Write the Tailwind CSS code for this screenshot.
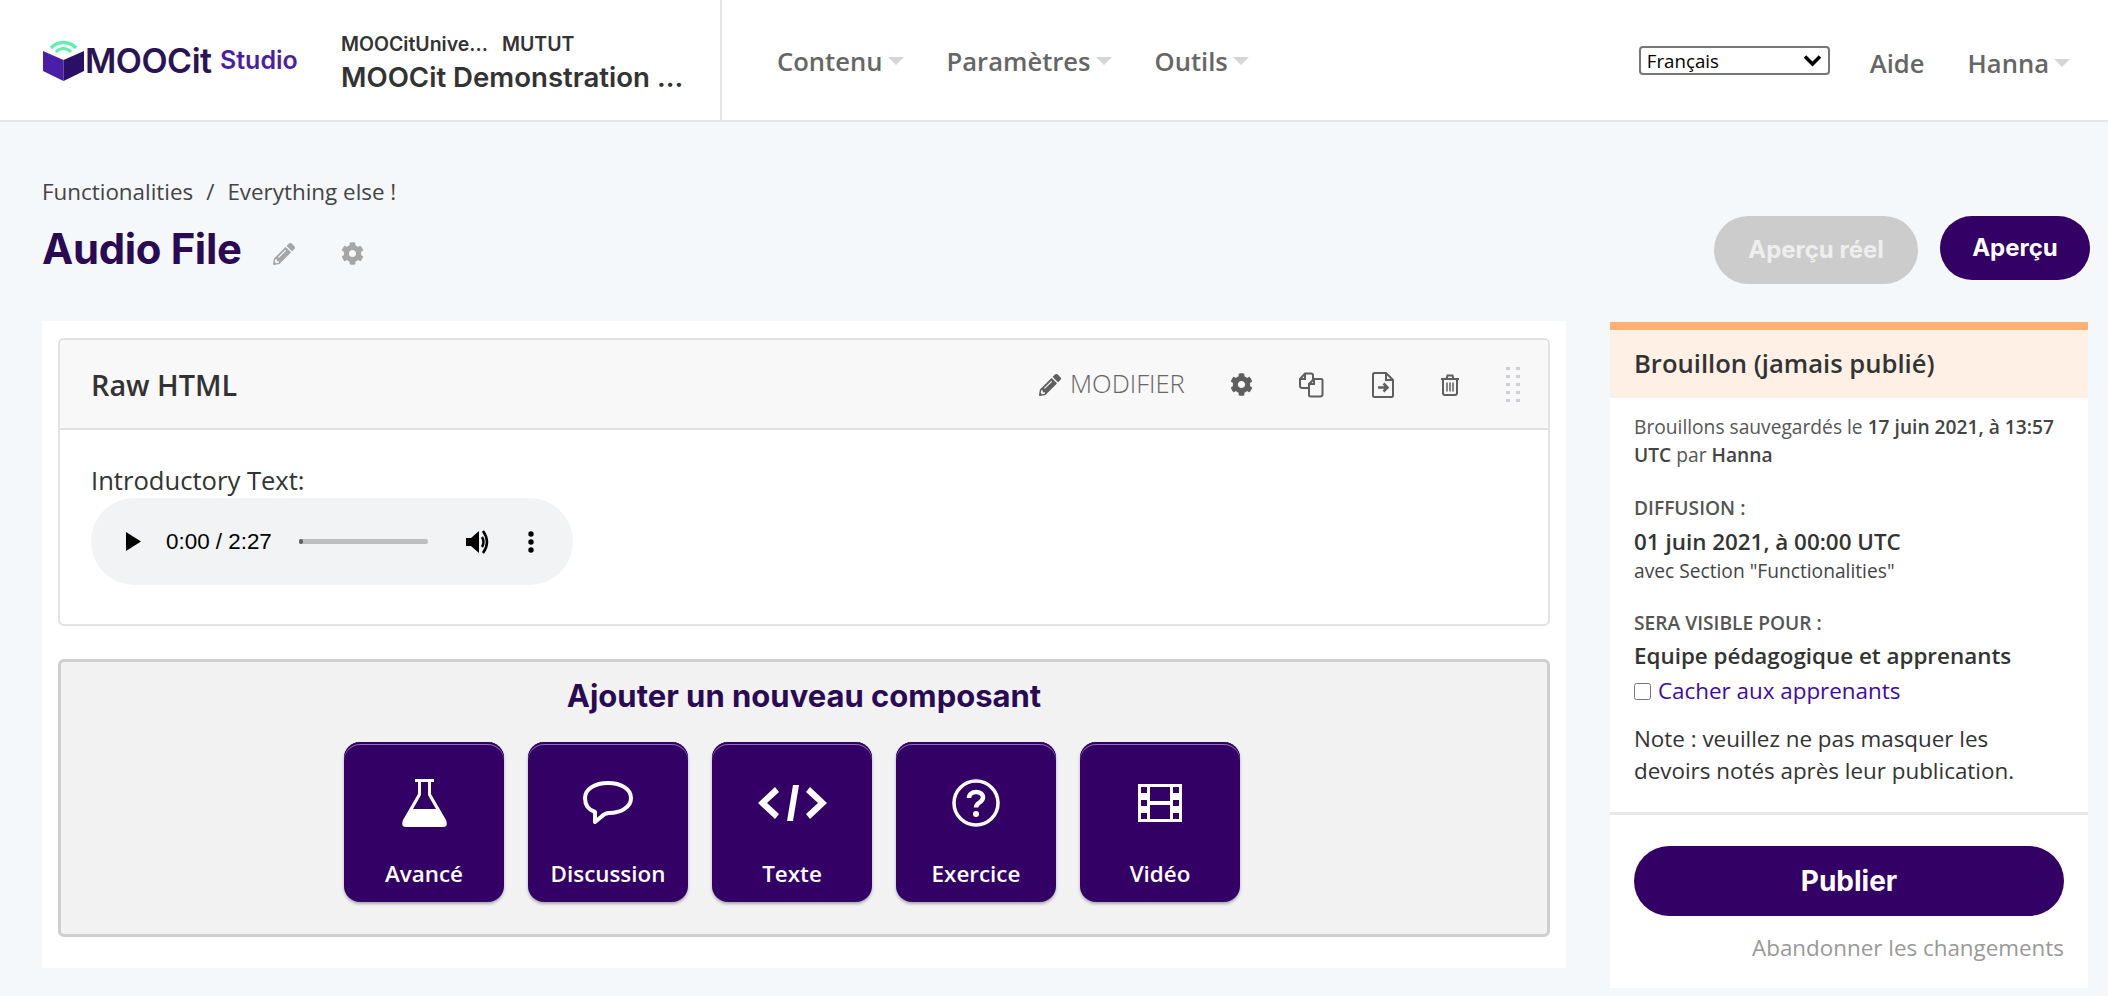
<!DOCTYPE html>
<html lang="fr">
<head>
    <meta charset="UTF-8">
    <title>Audio File</title>
    <script src="https://cdn.jsdelivr.net/npm/@tailwindcss/browser@4"></script>
</head>
<body class="bg-[#f5f8fb] font-['Open_Sans',sans-serif] text-[#333] w-[2108px] h-[996px] overflow-hidden">

    <!-- Header -->
    <header class="h-[122px] bg-white border-b-2 border-[#e4e6ea] flex items-stretch">
        <div class="w-[722px] shrink-0 border-r-2 border-[#e4e6ea] flex items-center pl-[43px]">
            <svg class="w-[41px] h-[42px] shrink-0 -mt-[1px]" viewBox="0 0 41 42">
                <path d="M0 12 L20.500 21 L20.500 42 L0 32 Z" fill="#4a1fa8"/>
                <path d="M41 12 L20.500 21 L20.500 42 L41 32 Z" fill="#2a0f66"/>
                <path d="M8 9 A17 17 0 0 1 33 9" fill="none" stroke="#5ff0b0" stroke-width="3.500"/>
                <path d="M13 13 A10 10 0 0 1 28 13" fill="none" stroke="#5ff0b0" stroke-width="3"/>
            </svg>
            <span class="ml-[1px] w-[135px] font-['Inter',sans-serif] font-semibold text-[34px] tracking-[-0.5px] text-[#2a1454]">MOOCit</span>
            <span class="w-[121px] font-['Inter',sans-serif] font-semibold text-[25px] text-[#4b1fa5] mt-[1px]">Studio</span>
            <div class="flex flex-col font-['Inter',sans-serif] text-[#333] whitespace-nowrap pt-[6px]">
                <div class="text-[19.500px] font-semibold leading-[24px] flex gap-[14px]"><span>MOOCitUnive...</span><span>MUTUT</span></div>
                <div class="text-[27.600px] font-semibold leading-[36px] mt-[3px]">MOOCit Demonstration ...</div>
            </div>
        </div>
        <nav class="flex-1 flex items-center pl-[55px] pt-[5px] text-[25.600px] font-semibold text-[#666]">
            <span>Contenu</span>
            <span class="ml-[5px] mb-[4px] border-x-[8px] border-t-[8px] border-x-transparent border-t-[#d5d5d5]"></span>
            <span class="ml-[43px]">Paramètres</span>
            <span class="ml-[5px] mb-[4px] border-x-[8px] border-t-[8px] border-x-transparent border-t-[#d5d5d5]"></span>
            <span class="ml-[43px]">Outils</span>
            <span class="ml-[5px] mb-[4px] border-x-[8px] border-t-[8px] border-x-transparent border-t-[#d5d5d5]"></span>
        </nav>
        <div class="flex items-center pr-[38px] pt-[8px] text-[25.600px] font-semibold text-[#666]">
            <div class="relative mb-[7px]">
                <select class="block appearance-none w-[191px] h-[29px] pl-[6px] border-2 border-[#767676] rounded-[4px] bg-white text-[18.700px] leading-[25px] font-normal text-black">
                    <option>Français</option>
                </select>
                <svg class="absolute right-[8px] top-[8px] w-[19px] h-[13px] fill-none stroke-black stroke-[3.500px]" viewBox="0 0 19 13"><path d="M2 2.500 L9.500 10 L17 2.500"/></svg>
            </div>
            <span class="ml-[40px]">Aide</span>
            <span class="ml-[43px]">Hanna</span>
            <span class="ml-[5px] mb-[2px] border-x-[8px] border-t-[8px] border-x-transparent border-t-[#d5d5d5]"></span>
        </div>
    </header>

    <div class="pl-[42px] pr-[18px]">
        <!-- Title row -->
        <div class="h-[199px] flex justify-between">
            <div class="pt-[56px]">
                <div class="flex text-[22.400px] leading-[28px] text-[#444]">
                    <span>Functionalities</span>
                    <span class="mx-[13px]">/</span>
                    <span>Everything else !</span>
                </div>
                <div class="flex items-center mt-[19px] h-[48px]">
                    <h1 class="font-['Inter',sans-serif] font-bold text-[41.800px] tracking-[-0.3px] text-[#2a0a52]">Audio File</h1>
                    <svg class="w-[22px] h-[22px] ml-[31px] mt-[9px] fill-[#a6a6a6]" viewBox="0 0 512 512"><path d="M497.900 142.100l-46.100 46.100c-4.700 4.700-12.300 4.700-17 0l-111-111c-4.700-4.700-4.700-12.300 0-17l46.100-46.100c18.700-18.700 49.100-18.700 67.900 0l60.100 60.100c18.800 18.700 18.800 49.100 0 67.900zM284.200 99.800L21.600 362.400.4 483.900c-2.900 16.400 11.400 30.600 27.800 27.800l121.500-21.300 262.600-262.600c4.700-4.700 4.700-12.300 0-17l-111-111c-4.800-4.700-12.400-4.700-17.100 0zM124.100 339.900c-5.500-5.500-5.500-14.300 0-19.800l154-154c5.500-5.500 14.300-5.500 19.800 0s5.500 14.300 0 19.800l-154 154c-5.500 5.500-14.300 5.500-19.800 0zM88 424h48v36.300l-64.500 11.300-31.100-31.100L51.700 376H88v48z"/></svg>
                    <svg class="w-[23px] h-[23px] ml-[46px] mt-[9px] fill-[#a6a6a6]" viewBox="0 0 512 512"><path d="M487.400 315.700l-42.600-24.600c4.300-23.200 4.300-47 0-70.200l42.600-24.600c4.900-2.800 7.100-8.600 5.500-14-11.100-35.600-30-67.800-54.700-94.600-3.800-4.100-10-5.100-14.800-2.300L380.800 110c-17.900-15.400-38.500-27.300-60.800-35.100V25.800c0-5.600-3.900-10.500-9.400-11.700-36.700-8.200-74.300-7.800-109.200 0-5.500 1.200-9.400 6.100-9.400 11.700V75c-22.200 7.900-42.800 19.800-60.800 35.100L88.700 85.500c-4.900-2.800-11-1.900-14.800 2.300-24.700 26.700-43.600 58.900-54.700 94.600-1.700 5.400.6 11.200 5.500 14L67.300 221c-4.300 23.200-4.300 47 0 70.200l-42.600 24.600c-4.900 2.800-7.100 8.600-5.500 14 11.100 35.600 30 67.800 54.700 94.600 3.800 4.100 10 5.100 14.800 2.300l42.600-24.600c17.900 15.400 38.500 27.300 60.800 35.100v49.200c0 5.600 3.900 10.500 9.400 11.700 36.700 8.200 74.300 7.800 109.200 0 5.500-1.200 9.400-6.100 9.400-11.700v-49.200c22.200-7.900 42.800-19.800 60.800-35.100l42.600 24.600c4.900 2.800 11 1.900 14.800-2.300 24.700-26.700 43.600-58.900 54.700-94.600 1.500-5.500-.7-11.300-5.600-14.100zM256 336c-44.100 0-80-35.900-80-80s35.900-80 80-80 80 35.900 80 80-35.900 80-80 80z"/></svg>
                </div>
            </div>
            <div class="flex items-start pt-[94px] gap-[22px]">
                <button class="w-[204px] h-[68px] rounded-full bg-[#cccccc] text-[#eeeeee] font-['Inter',sans-serif] font-bold text-[24px]">Aperçu réel</button>
                <button class="w-[150px] h-[64px] rounded-full bg-[#330066] text-white font-['Inter',sans-serif] font-bold text-[24px]">Aperçu</button>
            </div>
        </div>

        <div class="flex items-start">
            <!-- Main column -->
            <main class="w-[1524px] h-[647px] bg-white pt-[17px] px-[16px]">
                <section class="h-[288px] border-2 border-[#e2e2e2] rounded-[6px] flex flex-col">
                    <div class="h-[90px] bg-[#f8f8f8] border-b-2 border-[#e2e2e2] rounded-t-[6px] flex items-center pl-[31px] pr-[28px] pt-[1px] shrink-0">
                        <h2 class="text-[28.800px] font-semibold text-[#333] mt-[1px]">Raw HTML</h2>
                        <svg class="w-[22px] h-[22px] ml-[auto] fill-[#5f5f5f]" viewBox="0 0 512 512"><path d="M497.900 142.100l-46.100 46.100c-4.700 4.700-12.300 4.700-17 0l-111-111c-4.700-4.700-4.700-12.300 0-17l46.100-46.100c18.700-18.700 49.100-18.700 67.900 0l60.100 60.100c18.800 18.700 18.800 49.100 0 67.900zM284.200 99.800L21.600 362.400.4 483.900c-2.900 16.400 11.400 30.600 27.800 27.800l121.500-21.300 262.600-262.600c4.700-4.700 4.700-12.300 0-17l-111-111c-4.800-4.700-12.400-4.700-17.100 0zM124.100 339.900c-5.500-5.500-5.500-14.300 0-19.800l154-154c5.500-5.500 14.300-5.500 19.800 0s5.500 14.300 0 19.800l-154 154c-5.500 5.500-14.300 5.500-19.800 0zM88 424h48v36.300l-64.500 11.300-31.100-31.100L51.700 376H88v48z"/></svg>
                        <span class="ml-[9px] w-[114px] text-[25.600px] font-light text-[#666] whitespace-nowrap">MODIFIER</span>
                        <svg class="w-[23px] h-[23px] ml-[46px] fill-[#5f5f5f]" viewBox="0 0 512 512"><path d="M487.400 315.700l-42.600-24.600c4.300-23.200 4.300-47 0-70.200l42.600-24.600c4.900-2.800 7.100-8.600 5.500-14-11.100-35.600-30-67.800-54.700-94.600-3.800-4.100-10-5.100-14.800-2.300L380.800 110c-17.900-15.400-38.500-27.300-60.800-35.100V25.800c0-5.600-3.900-10.500-9.400-11.700-36.700-8.200-74.300-7.800-109.200 0-5.500 1.200-9.400 6.100-9.400 11.700V75c-22.200 7.900-42.800 19.800-60.800 35.100L88.700 85.500c-4.900-2.800-11-1.900-14.800 2.300-24.700 26.700-43.600 58.900-54.700 94.600-1.700 5.400.6 11.200 5.500 14L67.300 221c-4.300 23.200-4.300 47 0 70.200l-42.600 24.600c-4.900 2.800-7.100 8.600-5.500 14 11.100 35.600 30 67.800 54.700 94.600 3.800 4.100 10 5.100 14.800 2.300l42.600-24.600c17.900 15.400 38.500 27.300 60.800 35.100v49.200c0 5.600 3.900 10.500 9.400 11.700 36.700 8.200 74.300 7.800 109.200 0 5.500-1.200 9.400-6.100 9.400-11.700v-49.200c22.200-7.900 42.800-19.800 60.800-35.100l42.600 24.600c4.900 2.800 11 1.900 14.800-2.300 24.700-26.700 43.600-58.900 54.700-94.600 1.500-5.500-.7-11.300-5.600-14.100zM256 336c-44.100 0-80-35.900-80-80s35.900-80 80-80 80 35.900 80 80-35.900 80-80 80z"/></svg>
                        <svg class="w-[26px] h-[26px] ml-[45px] fill-none stroke-[#5f5f5f] stroke-2" viewBox="0 0 26 26"><path d="M12 16 H4.500 Q2 16 2 14 V7 L7 1.500 H13 Q15 1.500 15 3.500 V7.500"/><path d="M7 2 V7 H2"/><path d="M11 11 V23 Q11 24.500 13 24.500 H22 Q24.500 24.500 24.500 22.500 V8 Q24.500 7 23 7 H16 L11 12"/><path d="M16 7.500 V12 H11"/></svg>
                        <svg class="w-[22px] h-[26px] ml-[48px] fill-none stroke-[#5f5f5f] stroke-2" viewBox="0 0 22 26"><path d="M14 1 H2.500 Q1 1 1 2.500 V23.500 Q1 25 2.500 25 H19.500 Q21 25 21 23.500 V8 Z"/><path d="M14 1 V8 H21"/><path d="M6 15.500 H15 M11.500 11.500 L15.500 15.500 L11.500 19.500" stroke-width="2.500"/></svg>
                        <svg class="w-[20px] h-[22px] ml-[46px] fill-none stroke-[#5f5f5f] stroke-2" viewBox="0 0 20 22"><path d="M1 5 H19 M6.500 5 L7.500 1.500 H12.500 L13.500 5 M3 5 V19 Q3 21 5 21 H15 Q17 21 17 19 V5"/><path d="M7 8.500 V17.500 M10 8.500 V17.500 M13 8.500 V17.500" stroke-width="1.500"/></svg>
                        <div class="ml-[46px] grid grid-cols-2 gap-x-[6px] gap-y-[5px]">
                            <i class="w-[4px] h-[3px] bg-[#ccd0d6]"></i><i class="w-[4px] h-[3px] bg-[#ccd0d6]"></i>
                            <i class="w-[4px] h-[3px] bg-[#ccd0d6]"></i><i class="w-[4px] h-[3px] bg-[#ccd0d6]"></i>
                            <i class="w-[4px] h-[3px] bg-[#ccd0d6]"></i><i class="w-[4px] h-[3px] bg-[#ccd0d6]"></i>
                            <i class="w-[4px] h-[3px] bg-[#ccd0d6]"></i><i class="w-[4px] h-[3px] bg-[#ccd0d6]"></i>
                            <i class="w-[4px] h-[3px] bg-[#ccd0d6]"></i><i class="w-[4px] h-[3px] bg-[#ccd0d6]"></i>
                        </div>
                    </div>
                    <div class="pl-[31px] pt-[35px]">
                        <p class="text-[25.600px] leading-[32px] text-[#333]">Introductory Text:</p>
                        <div class="w-[482px] h-[87px] mt-[1px] rounded-full bg-[#f1f3f4] flex items-center pl-[35px] font-['Liberation_Sans',sans-serif] text-[22.400px] text-black">
                            <svg class="w-[15px] h-[19px]" viewBox="0 0 15 19"><path d="M0 0 L15 9.500 L0 19 Z"/></svg>
                            <span class="ml-[25px] w-[108px] whitespace-nowrap">0:00 / 2:27</span>
                            <div class="ml-[25px] w-[129px] h-[5px] rounded-full bg-[#bcbdbe]"><div class="w-[4px] h-[5px] rounded-full bg-[#5f5f5f]"></div></div>
                            <svg class="w-[25px] h-[26px] ml-[38px]" viewBox="0 0 25 26"><path d="M0 9 H5 L13 2 V24 L5 17 H0 Z"/><path d="M16 8 Q19 13 16 18" fill="none" stroke="#000" stroke-width="2.500"/><path d="M17 2 Q25 13 17 24" fill="none" stroke="#000" stroke-width="2.500"/></svg>
                            <svg class="w-[6px] h-[22px] ml-[37px]" viewBox="0 0 6 22"><circle cx="3" cy="3" r="2.700"/><circle cx="3" cy="11" r="2.700"/><circle cx="3" cy="19" r="2.700"/></svg>
                        </div>
                    </div>
                </section>

                <!-- Add component -->
                <section class="h-[278px] mt-[33px] bg-[#f2f2f2] border-[3px] border-[#cfcfcf] rounded-[6px] flex flex-col items-center">
                    <h3 class="mt-[14px] h-[40px] leading-[40px] font-['Inter',sans-serif] font-bold text-[31px] text-[#2a0a52]">Ajouter un nouveau composant</h3>
                    <div class="flex gap-[24px] mt-[26px] mr-[24px]">
                        <button class="w-[160px] h-[160px] rounded-[16px] bg-[#330066] shadow-[inset_0_2px_0_#330066,inset_0_3px_0_#8a70ad,0_2px_3px_rgba(0,0,0,0.3)] text-white text-[22.400px] leading-[20px] font-semibold flex flex-col items-center">
                            <span class="h-[122px] flex items-center"><svg class="w-[45px] h-[48px] fill-white" viewBox="0 0 45 48"><path fill-rule="evenodd" d="M13 0 H32 V3 H29 V15 L44 41 Q46.500 48 41 48 H4 Q-1.500 48 1 41 L16 15 V3 H13 Z M19 3 V16 L11 30 H34 L26 16 V3 Z"/></svg></span>
                            <span>Avancé</span>
                        </button>
                        <button class="w-[160px] h-[160px] rounded-[16px] bg-[#330066] shadow-[inset_0_2px_0_#330066,inset_0_3px_0_#8a70ad,0_2px_3px_rgba(0,0,0,0.3)] text-white text-[22.400px] leading-[20px] font-semibold flex flex-col items-center">
                            <span class="h-[122px] flex items-center"><svg class="w-[50px] h-[44px] fill-none stroke-white stroke-[4px]" viewBox="0 0 50 44"><path d="M25 2 C38 2 48 8 48 17 C48 26 38 32 26 32 C23 32 21 33 18 36 L12 41 L12 31 C6 29 2 24 2 17 C2 8 12 2 25 2 Z" stroke-linejoin="round"/></svg></span>
                            <span>Discussion</span>
                        </button>
                        <button class="w-[160px] h-[160px] rounded-[16px] bg-[#330066] shadow-[inset_0_2px_0_#330066,inset_0_3px_0_#8a70ad,0_2px_3px_rgba(0,0,0,0.3)] text-white text-[22.400px] leading-[20px] font-semibold flex flex-col items-center">
                            <span class="h-[122px] flex items-center"><svg class="w-[69px] h-[36px] fill-white" viewBox="0 0 69 36"><path d="M17 2 L21 7 L9 18 L21 29 L17 34 L0 18 Z M52 2 L48 7 L60 18 L48 29 L52 34 L69 18 Z M29 36 L35 0 L41 0 L35 36 Z"/></svg></span>
                            <span>Texte</span>
                        </button>
                        <button class="w-[160px] h-[160px] rounded-[16px] bg-[#330066] shadow-[inset_0_2px_0_#330066,inset_0_3px_0_#8a70ad,0_2px_3px_rgba(0,0,0,0.3)] text-white text-[22.400px] leading-[20px] font-semibold flex flex-col items-center">
                            <span class="h-[122px] flex items-center"><svg class="w-[48px] h-[48px] fill-none stroke-white" viewBox="0 0 48 48"><circle cx="24" cy="24" r="22" stroke-width="3.500"/><path d="M17 19 C17 11 31 11 31 18.500 C31 23.500 24 23.500 24 28.500" stroke-width="4.500"/><circle cx="24" cy="35" r="3" fill="#fff" stroke="none"/></svg></span>
                            <span>Exercice</span>
                        </button>
                        <button class="w-[160px] h-[160px] rounded-[16px] bg-[#330066] shadow-[inset_0_2px_0_#330066,inset_0_3px_0_#8a70ad,0_2px_3px_rgba(0,0,0,0.3)] text-white text-[22.400px] leading-[20px] font-semibold flex flex-col items-center">
                            <span class="h-[122px] flex items-center"><svg class="w-[44px] h-[38px] fill-white" viewBox="0 0 44 38"><path fill-rule="evenodd" d="M0 0 H44 V38 H0 Z M3 3 V9 H9 V3 Z M12 3 V17 H32 V3 Z M35 3 V9 H41 V3 Z M3 16 V22 H9 V16 Z M35 16 V22 H41 V16 Z M12 21 V35 H32 V21 Z M3 29 V35 H9 V29 Z M35 29 V35 H41 V29 Z"/></svg></span>
                            <span>Vidéo</span>
                        </button>
                    </div>
                </section>
            </main>

            <!-- Sidebar -->
            <aside class="w-[478px] ml-[44px] mt-[1px] h-[666px] bg-white flex flex-col">
                <div class="h-[76px] bg-[#fff0e6] border-t-[8px] border-[#ffb072] pl-[24px] flex items-center shrink-0">
                    <h2 class="text-[25.600px] font-semibold text-[#333] mt-[1px]">Brouillon (jamais publié)</h2>
                </div>
                <div class="px-[24px] pt-[15px] h-[417px] border-b-[3px] border-[#e8e8e8] shrink-0">
                    <p class="text-[19.200px] leading-[28px] text-[#555]">Brouillons sauvegardés le <b class="font-semibold text-[#444]">17 juin 2021, à 13:57 UTC</b> par <b class="font-semibold text-[#444]">Hanna</b></p>
                    <p class="mt-[25px] text-[19.200px] leading-[28px] font-semibold text-[#555]">DIFFUSION :</p>
                    <p class="mt-[6px] text-[22.400px] leading-[28px] font-semibold text-[#333]">01 juin 2021, à 00:00 UTC</p>
                    <p class="text-[19.200px] leading-[26px] text-[#444] mt-[2px]">avec Section "Functionalities"</p>
                    <p class="mt-[25px] text-[19.200px] leading-[28px] font-semibold text-[#555]">SERA VISIBLE POUR :</p>
                    <p class="mt-[3px] text-[22.400px] leading-[32px] font-semibold text-[#333]">Equipe pédagogique et apprenants</p>
                    <label class="flex items-center h-[32px] mt-[3px] text-[22.400px] text-[#3e0aa8]">
                        <input type="checkbox" class="w-[17px] h-[17px] mr-[7px]">
                        <span>Cacher aux apprenants</span>
                    </label>
                    <p class="mt-[16px] text-[22.400px] leading-[32px] text-[#333]">Note : veuillez ne pas masquer les devoirs notés après leur publication.</p>
                </div>
                <div class="px-[24px] pt-[31px]">
                    <button class="w-full h-[70px] rounded-full bg-[#330066] text-white font-['Inter',sans-serif] font-bold text-[28px]">Publier</button>
                    <p class="mt-[16px] text-right text-[22.400px] leading-[32px] text-[#999]">Abandonner les changements</p>
                </div>
            </aside>
        </div>
    </div>
</body>
</html>
